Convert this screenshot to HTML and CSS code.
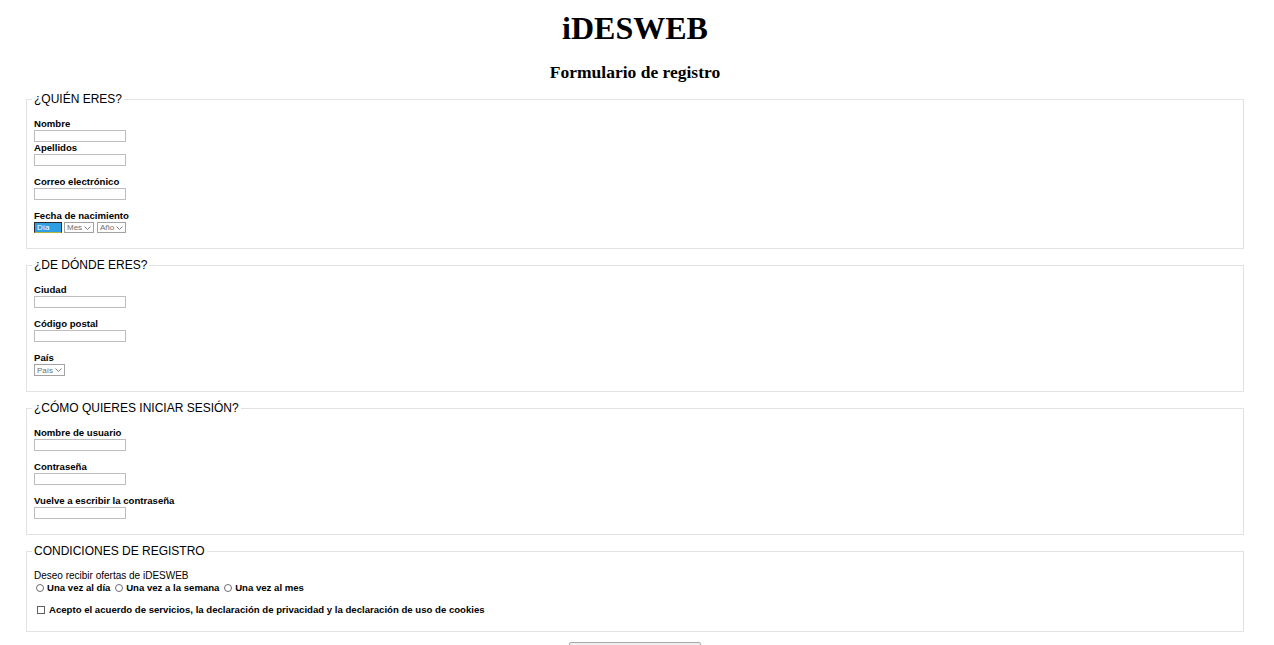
FILE: index.html
```html
<!DOCTYPE html>
<html lang="es">
<head>
<meta charset="utf-8">
<title>iDESWEB - Formulario de registro</title>
<link rel="stylesheet" href="styles.css">
</head>
<body>
<div class="page">
  <h1 class="site-title">iDESWEB</h1>
  <h2 class="form-title">Formulario de registro</h2>
  <form class="form">
    <fieldset class="group">
      <legend class="group-title">¿QUIÉN ERES?</legend>
      <div class="field tight">
        <label class="lbl" for="nombre">Nombre</label>
        <input class="txt" id="nombre" type="text">
      </div>
      <div class="field">
        <label class="lbl" for="apellidos">Apellidos</label>
        <input class="txt" id="apellidos" type="text">
      </div>
      <div class="field">
        <label class="lbl" for="correo">Correo electrónico</label>
        <input class="txt" id="correo" type="email">
      </div>
      <div class="field">
        <span class="lbl">Fecha de nacimiento</span>
        <div class="selects short">
          <span class="sel sel-dia"><select class="sel-box active" aria-label="Día"><option>Día</option></select></span>
          <span class="sel sel-mes"><select class="sel-box" aria-label="Mes"><option>Mes</option></select><svg class="chev" viewBox="0 0 7 4"><path d="M0.5 0.5 3.5 3.5 6.5 0.5"/></svg></span>
          <span class="sel sel-anio"><select class="sel-box" aria-label="Año"><option>Año</option></select><svg class="chev" viewBox="0 0 7 4"><path d="M0.5 0.5 3.5 3.5 6.5 0.5"/></svg></span>
        </div>
      </div>
    </fieldset>

    <fieldset class="group">
      <legend class="group-title">¿DE DÓNDE ERES?</legend>
      <div class="field">
        <label class="lbl" for="ciudad">Ciudad</label>
        <input class="txt" id="ciudad" type="text">
      </div>
      <div class="field">
        <label class="lbl" for="cp">Código postal</label>
        <input class="txt" id="cp" type="text">
      </div>
      <div class="field">
        <span class="lbl">País</span>
        <div class="selects">
          <span class="sel sel-pais"><select class="sel-box" aria-label="País"><option>País</option></select><svg class="chev" viewBox="0 0 7 4"><path d="M0.5 0.5 3.5 3.5 6.5 0.5"/></svg></span>
        </div>
      </div>
    </fieldset>

    <fieldset class="group">
      <legend class="group-title">¿CÓMO QUIERES INICIAR SESIÓN?</legend>
      <div class="field">
        <label class="lbl" for="usuario">Nombre de usuario</label>
        <input class="txt" id="usuario" type="text">
      </div>
      <div class="field">
        <label class="lbl" for="pass">Contraseña</label>
        <input class="txt" id="pass" type="password">
      </div>
      <div class="field">
        <label class="lbl" for="pass2">Vuelve a escribir la contraseña</label>
        <input class="txt" id="pass2" type="password">
      </div>
    </fieldset>

    <fieldset class="group">
      <legend class="group-title">CONDICIONES DE REGISTRO</legend>
      <div class="field">
        <p class="plain">Deseo recibir ofertas de iDESWEB</p>
        <div class="opts">
          <label class="opt"><input class="radio" type="radio" name="ofertas">Una vez al día</label>
          <label class="opt"><input class="radio" type="radio" name="ofertas">Una vez a la semana</label>
          <label class="opt"><input class="radio" type="radio" name="ofertas">Una vez al mes</label>
        </div>
      </div>
      <div class="field">
        <div class="opts">
          <label class="opt"><input class="check" type="checkbox">Acepto el acuerdo de servicios, la declaración de privacidad y la declaración de uso de cookies</label>
        </div>
      </div>
    </fieldset>

    <button class="submit" type="submit" aria-label="Registrarse"></button>
  </form>
</div>
</body>
</html>
```

FILE: styles.css
```css
html {
  scrollbar-width: none;
}

body {
  margin: 0;
  background: #ffffff;
  color: #000000;
  font-family: "Liberation Sans", Arial, sans-serif;
}

.page {
  padding: 0 30px 0 26px;
}

.site-title {
  margin: 10px 0 0;
  font-family: "Liberation Serif", "Times New Roman", serif;
  font-size: 32px;
  line-height: 37px;
  font-weight: bold;
  text-align: center;
}

.form-title {
  margin: 15px 0 0;
  font-family: "Liberation Serif", "Times New Roman", serif;
  font-size: 17.5px;
  line-height: 20px;
  font-weight: bold;
  text-align: center;
}

.form {
  margin: 0;
}

.group {
  margin: 9px 0 0;
  padding: 11px 7px 15px;
  border: 1px solid #e2e2e2;
  min-width: 0;
}

.group:first-of-type {
  margin-top: 10px;
}

.group-title {
  margin-left: -2px;
  padding: 0 2px;
  font-size: 12px;
  line-height: 15px;
  color: #000;
}

.field + .field {
  margin-top: 10px;
}

.field.tight + .field {
  margin-top: 0;
}

.lbl {
  display: block;
  font-size: 9.6px;
  line-height: 12px;
  font-weight: bold;
}

.txt {
  display: block;
  box-sizing: border-box;
  width: 92px;
  height: 12px;
  margin: 0;
  padding: 0 2px;
  border: 1px solid #bdbdbd;
  border-radius: 0;
  font-size: 8px;
  background: #fff;
  outline: none;
}

.selects {
  display: flex;
  gap: 2px;
  height: 12px;
}

.sel {
  position: relative;
  display: block;
  height: 12px;
}

.selects.short,
.selects.short .sel,
.selects.short .sel-box {
  height: 11px;
}

.sel-dia { width: 28px; }
.sel-mes { width: 30px; }
.sel-anio { width: 29px; margin-left: 1px; }
.sel-pais { width: 31px; }

.sel-box {
  -webkit-appearance: none;
  appearance: none;
  display: block;
  box-sizing: border-box;
  width: 100%;
  height: 12px;
  margin: 0;
  padding: 0 0 0 2px;
  border: 1px solid #a2a2a2;
  border-radius: 0;
  background: #fff;
  color: #6e6e6e;
  font-family: "Liberation Sans", Arial, sans-serif;
  font-size: 8px;
  line-height: 9px;
  outline: none;
}

.sel-box.active {
  background: #2f9fe4;
  border-color: #2b2b2b;
  border-bottom-color: #b8b23a;
  color: #ffffff;
}

.chev {
  position: absolute;
  right: 3px;
  top: 4px;
  width: 7px;
  height: 4px;
  fill: none;
  stroke: #7a7a7a;
  stroke-width: 1;
  pointer-events: none;
}

.selects.short .chev {
  top: 3.5px;
}

.plain {
  margin: 0;
  font-size: 10px;
  line-height: 12px;
}

.opts {
  font-size: 9.6px;
  line-height: 12px;
  font-weight: bold;
}

.opt {
  white-space: nowrap;
}

.radio {
  -webkit-appearance: none;
  appearance: none;
  box-sizing: border-box;
  width: 8px;
  height: 8px;
  margin: 0 3px 0 2px;
  border: 1px solid #6f6f6f;
  border-radius: 50%;
  background: #fff;
  vertical-align: -1px;
}

.check {
  -webkit-appearance: none;
  appearance: none;
  box-sizing: border-box;
  width: 8px;
  height: 8px;
  margin: 0 4px 0 3px;
  border: 1px solid #5f5f5f;
  border-radius: 0;
  background: #fff;
  vertical-align: -1px;
}

.submit {
  display: block;
  box-sizing: border-box;
  width: 132px;
  height: 22px;
  margin: 10px auto 0;
  padding: 0;
  border: 1px solid #a9a9a9;
  border-radius: 2px;
  background: #efefef;
}
```
